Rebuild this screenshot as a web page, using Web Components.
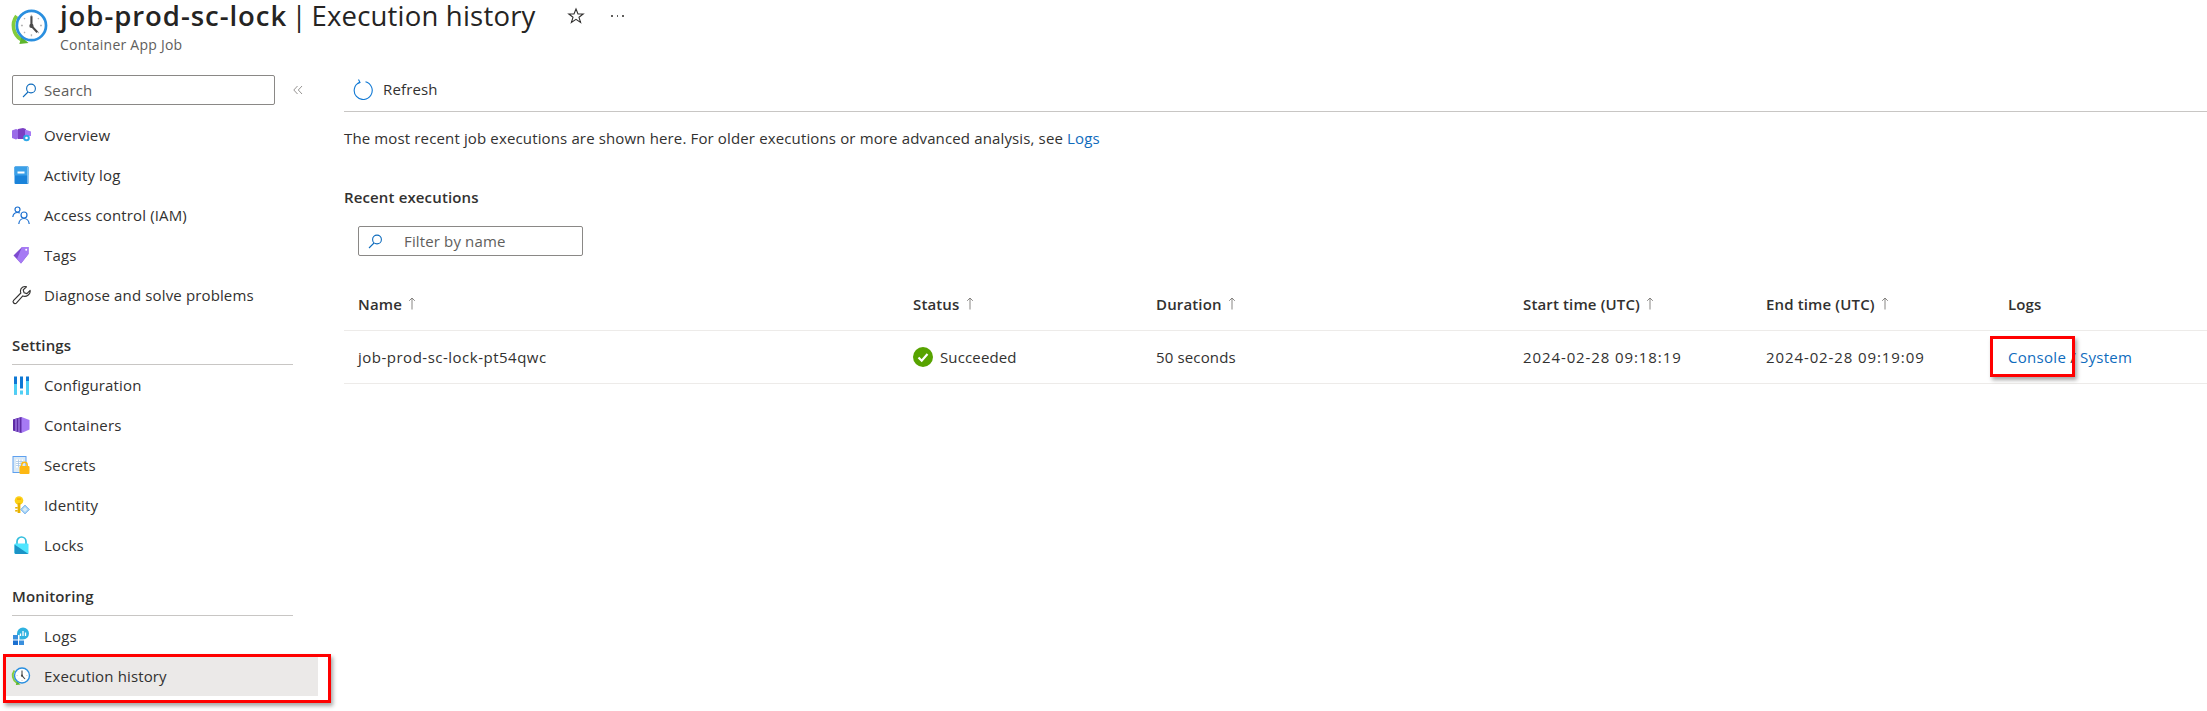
<!DOCTYPE html>
<html lang="en">
<head>
<meta charset="utf-8">
<title>Execution history</title>
<style>
	html, body { margin: 0; background: #fff; }
	body {
		color: #323130;
		font-family: "Open Sans", "Noto Sans", sans-serif;
		font-size: 15px;
		letter-spacing: .14px;
		overflow: hidden;
	}
	.name { letter-spacing: .5px; }
	.date { letter-spacing: .9px; }
</style>
</head>
<body>
<az-blade>
	<az-blade-header slot="header" resource="job-prod-sc-lock" page="Execution history" kind="Container App Job"></az-blade-header>
	<az-sidebar slot="side">
		<az-nav-item icon="overview">Overview</az-nav-item>
		<az-nav-item icon="activity">Activity log</az-nav-item>
		<az-nav-item icon="iam">Access control (IAM)</az-nav-item>
		<az-nav-item icon="tags">Tags</az-nav-item>
		<az-nav-item icon="wrench">Diagnose and solve problems</az-nav-item>
		<az-nav-heading>Settings</az-nav-heading>
		<az-nav-item icon="config">Configuration</az-nav-item>
		<az-nav-item icon="containers">Containers</az-nav-item>
		<az-nav-item icon="secrets">Secrets</az-nav-item>
		<az-nav-item icon="identity">Identity</az-nav-item>
		<az-nav-item icon="locks">Locks</az-nav-item>
		<az-nav-heading style="height:51px;padding-top:22px">Monitoring</az-nav-heading>
		<az-nav-item icon="logs">Logs</az-nav-item>
		<az-callout style="--t:-2px;--r:13px;--b:-7px;--l:3px">
			<az-nav-item icon="history" active>Execution history</az-nav-item>
		</az-callout>
	</az-sidebar>
	<az-history slot="main">
		<az-row head>
			<az-sort>Name</az-sort>
			<az-sort>Status</az-sort>
			<az-sort>Duration</az-sort>
			<az-sort>Start time (UTC)</az-sort>
			<az-sort>End time (UTC)</az-sort>
			<span>Logs</span>
		</az-row>
		<az-row>
			<span class="name">job-prod-sc-lock-pt54qwc</span>
			<az-status>Succeeded</az-status>
			<span>50 seconds</span>
			<span class="date">2024-02-28 09:18:19</span>
			<span class="date">2024-02-28 09:19:09</span>
			<span><az-callout style="--t:-11px;--r:-9px;--b:-10px;--l:-18px"><az-link>Console</az-link></az-callout> / <az-link>System</az-link></span>
		</az-row>
	</az-history>
</az-blade>

<script>
// Fluent-ish icons, all drawn on an 18x18 box (overview and wrench run a bit over)
const ICONS = {
	overview: `<path d="M0 4.500 4 3l3 1v8l-3 1.500L0 12z" fill="#9a6be8"/><path d="M6 3l5-1 3 1v10H6z" fill="#7b3fc4"/><path d="M13 3.500l6 2V10h-6z" fill="#a67af4"/><circle cx="14.500" cy="12" r="3.300" fill="#2fa8e8"/><circle cx="14.500" cy="12" r="1.300" fill="#fff"/>`,
	activity: `<rect x="2.500" y="0.500" width="14" height="17.500" rx="1" fill="#1a83da"/><rect x="2.500" y="0.500" width="14" height="9" rx="1" fill="#3aa0e8"/><rect x="15.300" y="1" width="1.200" height="16.500" fill="#9fd0f2"/><rect x="5.500" y="5.500" width="7" height="2" fill="#fff"/>`,
	iam: `<g fill="none" stroke="#1a6fd0" stroke-width="1.200"><circle cx="5.500" cy="3.500" r="2.500"/><path d="M.8 11c.4-3 2-4.500 4.700-4.500 1 0 1.800.2 2.500.6"/><circle cx="12" cy="9" r="3"/><path d="M6.800 18c.2-3 2.200-5.500 5.200-5.500S17 15 17.200 18"/></g>`,
	tags: `<path d="M10 1h6.500v7L9 17.500 1.500 9.500z" fill="#7d4ad0"/><path d="M10 1h6.500v7L9 17.500 5 13z" fill="#a67af4"/><circle cx="14.200" cy="3.800" r="1" fill="#fff"/>`,
	wrench: `<path d="M16.800 3.800l-3 3-2.600-.8-.8-2.600 3-3c-2.600-.8-5.400 1-5.600 3.800 0 .8.100 1.400.4 2L1.500 13c-1.600 1.600.9 4.100 2.500 2.500l6-6.600c3.300 1.300 7.300-1.400 6.800-5.100z" transform="translate(0 .3) scale(1.080)" fill="#fff" stroke="#323130" stroke-width="1.050" stroke-linejoin="round"/>`,
	config: `<rect x="2" y="0.500" width="3" height="18" fill="#0f78d4"/><rect x="2" y="8" width="3" height="10.500" fill="#4fd0f5"/><rect x="8" y="0.500" width="3" height="12" fill="#0f78d4"/><rect x="8" y="14.500" width="3" height="4" fill="#4fd0f5"/><rect x="14" y="0.500" width="3" height="18" fill="#0f78d4"/><rect x="14" y="5" width="3" height="13.500" fill="#4fd0f5"/>`,
	containers: `<path d="M1 3.500 9.500 1l8 3v9.500l-8 3.500L1 14.500z" fill="#a67af4"/><path d="M1 3.500 9.500 1v16L1 14.500z" fill="#5e2ca5"/><path d="M4 3v12M7 2.300v13.900" stroke="#b796f9" stroke-width="1"/>`,
	secrets: `<rect x="1" y="0.500" width="13" height="16" fill="#dbeaf6" stroke="#5ea0ef" stroke-width="1"/><path d="M4 3.500h7v8H4z" fill="#fff"/><path d="M4 5.500h7M4 7.500h7M4 9.500h5M6.500 3.500v8M9 3.500v6" stroke="#a8c6e4" stroke-width=".8"/><rect x="7.500" y="10" width="10" height="8" rx="1" fill="#fdb813"/><path d="M9.800 10.500V9a2.700 2.700 0 0 1 5.400 0v1.500" fill="none" stroke="#fdb813" stroke-width="1.500"/>`,
	identity: `<circle cx="7" cy="4.500" r="4.300" fill="#fcd116"/><rect x="5.600" y="7" width="2.800" height="10" fill="#e8b200"/><rect x="3.200" y="11" width="2.500" height="1.600" fill="#e8b200"/><rect x="3.200" y="14" width="2.500" height="1.600" fill="#e8b200"/><rect x="5" y="2.400" width="4" height="1.300" fill="#f6a800"/><path d="M13 9l4.500 4.500-4.500 4.500-4.500-4.500z" fill="#9fd0f2" stroke="#5ea0ef" stroke-width=".6"/><path d="M13 11l2.500 2.500-2.500 2.500-2.500-2.500z" fill="#fff" opacity=".6"/>`,
	locks: `<path d="M5 8.500V5.500a4.500 4.500 0 0 1 9 0v3" fill="none" stroke="#32bedd" stroke-width="1.700"/><rect x="2.500" y="7.500" width="14" height="10.500" rx="1" fill="#50e6ff"/><path d="M2.500 17V8.500L16.500 18H3.500z" fill="#1b93c6"/>`,
	logs: `<rect x="1" y="8" width="5" height="4.500" fill="#3a8fdd"/><rect x="1" y="13.500" width="5" height="4.500" fill="#1a6fd0"/><rect x="7" y="13.500" width="5" height="4.500" fill="#3a8fdd"/><path d="M5 6.500a6 6 0 1 1 6 6H7.500V8H5z" fill="#2fb2e0"/><path d="M8.500 9V6.500M11 9V4M13.500 9V5.500" stroke="#fff" stroke-width="1.300"/>`,
	history: `<path d="M4.800 15.800A8.500 8.500 0 0 1 2.400 3.500" fill="none" stroke="#84cc3c" stroke-width="1.900"/><path d="M8.500 17.500 3.800 18l1-3.700z" fill="#5eb52c"/><circle cx="10" cy="8.500" r="7.500" fill="#fff" stroke="#2a8fdf" stroke-width="1.400"/><path d="M10 3v1M10 13v1M4.600 8.500h1M14.400 8.500h1M6.200 4.700l.5.5M13.300 11.800l.5.5M6.200 12.300l.5-.5M13.300 5.200l.5-.5" stroke="#b4b4b4" stroke-width=".7"/><path d="M10 3.700v5l3 3.300" fill="none" stroke="#4a4a4a" stroke-width="1.100"/><circle cx="10" cy="8.700" r="1.100" fill="#4a4a4a"/>`,
};

class AzIcon extends HTMLElement {
	connectedCallback() {
		const size = this.getAttribute('size') || 18;
		this.attachShadow({ mode: 'open' }).innerHTML = `
			<style>
				:host { display: block; flex: none; line-height: 0; }
				svg { overflow: visible; }
			</style>
			<svg width="${size}" height="${size}" viewBox="0 0 18 18">${ICONS[this.getAttribute('name')]}</svg>
		`;
	}
}

class AzBlade extends HTMLElement {
	constructor() {
		super();
		this.attachShadow({ mode: 'open' }).innerHTML = `
			<style>
				:host { display: block; height: 711px; }
				.body { display: flex; }
				.side { flex: none; width: 344px; }
				.main { flex: 1; min-width: 0; }
			</style>
			<slot name="header"></slot>
			<div class="body">
				<div class="side"><slot name="side"></slot></div>
				<div class="main"><slot name="main"></slot></div>
			</div>
		`;
	}
}

class AzBladeHeader extends HTMLElement {
	connectedCallback() {
		const g = (n) => this.getAttribute(n);
		this.attachShadow({ mode: 'open' }).innerHTML = `
			<style>
				:host { display: flex; height: 65px; letter-spacing: 0; padding-left: 12px; box-sizing: border-box; }
				az-icon { margin-top: 9px; margin-right: 13px; }
				.titles { width: 500px; }
				.title {
					color: #252423;
					font-size: 27.500px;
					height: 32px;
					letter-spacing: .3px;
					line-height: 32px;
					white-space: nowrap;
					word-spacing: -3px;
				}
				.title b { font-weight: 600; letter-spacing: .95px; }
				.title span { letter-spacing: .2px; word-spacing: 0; }
				.kind { color: #605e5c; font-size: 14px; letter-spacing: .24px; line-height: 18px; margin-top: 4px; }
				.star { margin-left: 7px; margin-top: 7px; }
				.more { margin-left: 26px; margin-top: 15px; display: flex; gap: 4px; }
				.more i { width: 1.500px; height: 1.500px; background: #605e5c; }
			</style>
			<az-icon name="history" size="35"></az-icon>
			<div class="titles">
				<div class="title"><b>${g('resource')}</b> | <span>${g('page')}</span></div>
				<div class="kind">${g('kind')}</div>
			</div>
			<svg class="star" width="18" height="18" viewBox="0 0 18 18"><path d="M9 2l2 5h5.200l-4.200 3.300 1.600 5.200L9 12.400l-4.600 3.100L6 10.300 1.800 7H7z" fill="none" stroke="#323130" stroke-width="1.100"/></svg>
			<div class="more"><i></i><i></i><i></i></div>
		`;
	}
}

class AzSidebar extends HTMLElement {
	constructor() {
		super();
		this.attachShadow({ mode: 'open' }).innerHTML = `
			<style>
				:host { display: block; padding-top: 10px; }
				.top { display: flex; align-items: center; padding-left: 12px; margin-bottom: 10px; }
				.search {
					align-items: center;
					border: 1px solid #8a8886;
					border-radius: 2px;
					box-sizing: border-box;
					color: #605e5c;
					display: flex;
					gap: 7px;
					height: 30px;
					padding-left: 9px;
					width: 263px;
				}
				.chev { margin-left: 18px; }
				.list { display: flex; flex-direction: column; }
			</style>
			<div class="top">
				<div class="search">
					<svg width="15" height="15" viewBox="0 0 15 15"><circle cx="9" cy="5.500" r="4.400" fill="none" stroke="#0f6cbd" stroke-width="1.100"/><path d="M6 9 1 14" stroke="#0f6cbd" stroke-width="1.100"/></svg>
					Search
				</div>
				<svg class="chev" width="10" height="10" viewBox="0 0 10 10"><path d="M4.500 1 .8 5l3.700 4M9 1 5.300 5 9 9" fill="none" stroke="#8a8886" stroke-width=".9"/></svg>
			</div>
			<div class="list"><slot></slot></div>
		`;
	}
}

class AzNavItem extends HTMLElement {
	connectedCallback() {
		this.attachShadow({ mode: 'open' }).innerHTML = `
			<style>
				:host {
					align-items: center;
					display: flex;
					height: 40px;
					margin-left: 4px;
					padding-left: 8px;
					width: 306px;
				}
				:host([active]) { background: #ebe9e8; }
				az-icon { margin-right: 14px; }
			</style>
			<az-icon name="${this.getAttribute('icon')}"></az-icon>
			<slot></slot>
		`;
	}
}

class AzNavHeading extends HTMLElement {
	constructor() {
		super();
		this.attachShadow({ mode: 'open' }).innerHTML = `
			<style>
				:host {
					border-bottom: 1px solid #c8c6c4;
					box-sizing: border-box;
					display: block;
					font-weight: 600;
					height: 50px;
					line-height: 18px;
					margin-left: 12px;
					padding-top: 21px;
					width: 281px;
				}
			</style>
			<slot></slot>
		`;
	}
}

// Red annotation box laid over whatever it wraps
class AzCallout extends HTMLElement {
	constructor() {
		super();
		this.attachShadow({ mode: 'open' }).innerHTML = `
			<style>
				:host { display: inline-block; position: relative; }
				:host(:has(az-nav-item)) { display: block; }
				.box {
					border: 3px solid #f00;
					bottom: var(--b);
					box-shadow: 2px 3px 4px rgba(0, 0, 0, .35);
					left: var(--l);
					pointer-events: none;
					position: absolute;
					right: var(--r);
					top: var(--t);
				}
			</style>
			<slot></slot>
			<div class="box"></div>
		`;
	}
}

class AzHistory extends HTMLElement {
	constructor() {
		super();
		this.attachShadow({ mode: 'open' }).innerHTML = `
			<style>
				:host { display: block; }
				.bar {
					align-items: center;
					border-bottom: 1px solid #c8c6c4;
					box-sizing: border-box;
					display: flex;
					height: 42px;
					margin-top: 5px;
					padding-bottom: 3px;
					padding-left: 9px;
				}
				.bar svg { margin-right: 10px; }
				p { margin: 0; line-height: 18px; padding-top: 17px; }
				a { color: #0f6cbd; }
				h2 { font-size: inherit; font-weight: 600; line-height: 18px; margin: 41px 0 0; }
				.filter {
					align-items: center;
					border: 1px solid #8a8886;
					border-radius: 2px;
					box-sizing: border-box;
					color: #605e5c;
					display: flex;
					height: 30px;
					margin: 20px 0 22px 14px;
					padding-left: 9px;
					width: 225px;
				}
				.filter svg { margin-right: 21px; }
			</style>
			<div class="bar">
				<svg width="20" height="21" viewBox="0 0 20 21"><path d="M12.500 2.800A9 9 0 1 1 6.500 3.300M5.500 .5l1.500 3-3 1.500" fill="none" stroke="#0f78d4" stroke-width="1.100"/></svg>
				Refresh
			</div>
			<p>The most recent job executions are shown here. For older executions or more advanced analysis, see <a>Logs</a></p>
			<h2>Recent executions</h2>
			<div class="filter">
				<svg width="15" height="15" viewBox="0 0 15 15"><circle cx="9" cy="5.500" r="4.400" fill="none" stroke="#0f6cbd" stroke-width="1.100"/><path d="M6 9 1 14" stroke="#0f6cbd" stroke-width="1.100"/></svg>
				Filter by name
			</div>
			<slot></slot>
		`;
	}
}

class AzRow extends HTMLElement {
	constructor() {
		super();
		this.attachShadow({ mode: 'open' }).innerHTML = `
			<style>
				:host {
					align-items: center;
					border-bottom: 1px solid #edebe9;
					box-sizing: border-box;
					display: grid;
					grid-template-columns: 555px 243px 367px 243px 242px 1fr;
					height: 53px;
					padding-bottom: 1px;
					padding-left: 14px;
				}
				:host([head]) { font-weight: 600; }
			</style>
			<slot></slot>
		`;
	}
}

class AzSort extends HTMLElement {
	constructor() {
		super();
		this.attachShadow({ mode: 'open' }).innerHTML = `
			<style>
				:host { align-items: center; display: flex; gap: 6px; }
			</style>
			<slot></slot>
			<svg width="8" height="13" viewBox="0 0 8 13"><path d="M4 12.500V1M1.200 3.800 4 1l2.800 2.800" fill="none" stroke="#7a7876" stroke-width=".9"/></svg>
		`;
	}
}

class AzStatus extends HTMLElement {
	constructor() {
		super();
		this.attachShadow({ mode: 'open' }).innerHTML = `
			<style>
				:host { align-items: center; display: flex; gap: 7px; }
			</style>
			<svg width="20" height="20" viewBox="0 0 20 20"><circle cx="10" cy="10" r="10" fill="#57a300"/><path d="M5.500 10.500 8.700 13.700 14.500 7" fill="none" stroke="#fff" stroke-width="2.200"/></svg>
			<slot></slot>
		`;
	}
}

class AzLink extends HTMLElement {
	constructor() {
		super();
		this.attachShadow({ mode: 'open' }).innerHTML = `
			<style>
				:host { color: #0f6cbd; letter-spacing: .3px; }
			</style>
			<slot></slot>
		`;
	}
}

customElements.define('az-icon', AzIcon);
customElements.define('az-blade', AzBlade);
customElements.define('az-blade-header', AzBladeHeader);
customElements.define('az-sidebar', AzSidebar);
customElements.define('az-nav-item', AzNavItem);
customElements.define('az-nav-heading', AzNavHeading);
customElements.define('az-callout', AzCallout);
customElements.define('az-history', AzHistory);
customElements.define('az-row', AzRow);
customElements.define('az-sort', AzSort);
customElements.define('az-status', AzStatus);
customElements.define('az-link', AzLink);
</script>
</body>
</html>
